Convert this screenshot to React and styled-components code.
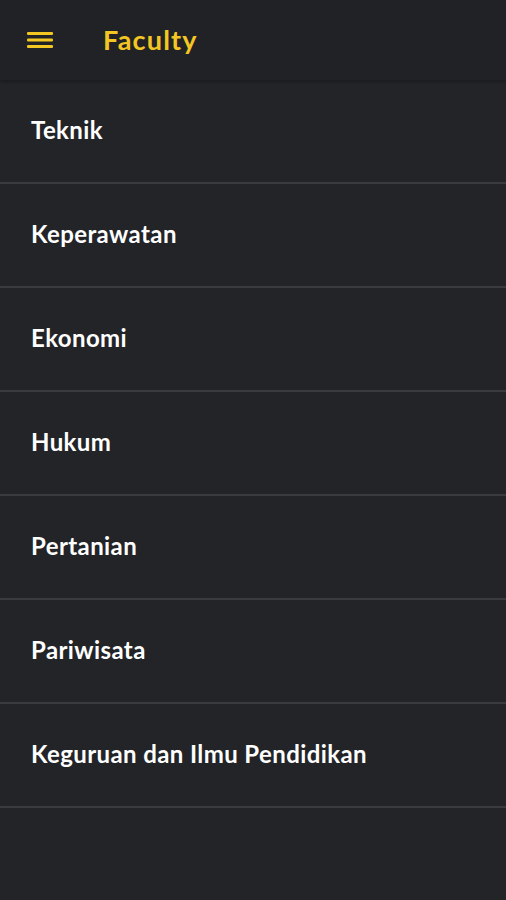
import styled, { createGlobalStyle } from "styled-components";

const GlobalStyle = createGlobalStyle`
  html, body {
    margin: 0;
    padding: 0;
    background: #232428;
  }
  * {
    box-sizing: border-box;
  }
`;

const Page = styled.div`
  width: 506px;
  min-height: 900px;
  background: #232428;
  font-family: Lato, "Noto Sans", sans-serif;
`;

const Header = styled.header`
  height: 80px;
  display: flex;
  align-items: center;
  padding-left: 27px;
  gap: 50px;
  background: #212226;
  box-shadow: 0 2px 3px rgba(0, 0, 0, 0.25);
`;

const MenuButton = styled.button`
  border: 0;
  padding: 0;
  background: none;
  display: flex;
  width: 26px;
  height: 20px;
`;

const Title = styled.h1`
  margin: 0 0 1px;
  font-size: 27px;
  font-weight: 700;
  letter-spacing: 1.2px;
  color: #f3c623;
`;

const List = styled.ul`
  list-style: none;
  margin: 0;
  padding: 0;
`;

const Item = styled.li`
  height: 104px;
  display: flex;
  align-items: center;
  padding: 0 0 4px 31px;
  border-bottom: 2px solid #3a3b3f;
  color: #ffffff;
  font-size: 24px;
  font-weight: 700;
  letter-spacing: 0.4px;
`;

const faculties = [
  "Teknik",
  "Keperawatan",
  "Ekonomi",
  "Hukum",
  "Pertanian",
  "Pariwisata",
  "Keguruan dan Ilmu Pendidikan",
];

export default function App() {
  return (
    <Page>
      <GlobalStyle />
      <Header>
        <MenuButton aria-label="menu">
          <svg width="26" height="20" viewBox="0 0 26 20">
            <rect x="0" y="2" width="26" height="3" rx="1" fill="#f3c623" />
            <rect x="0" y="8.5" width="26" height="3" rx="1" fill="#f3c623" />
            <rect x="0" y="15" width="26" height="3" rx="1" fill="#f3c623" />
          </svg>
        </MenuButton>
        <Title>Faculty</Title>
      </Header>
      <List>
        {faculties.map((name) => (
          <Item key={name}>{name}</Item>
        ))}
      </List>
    </Page>
  );
}
